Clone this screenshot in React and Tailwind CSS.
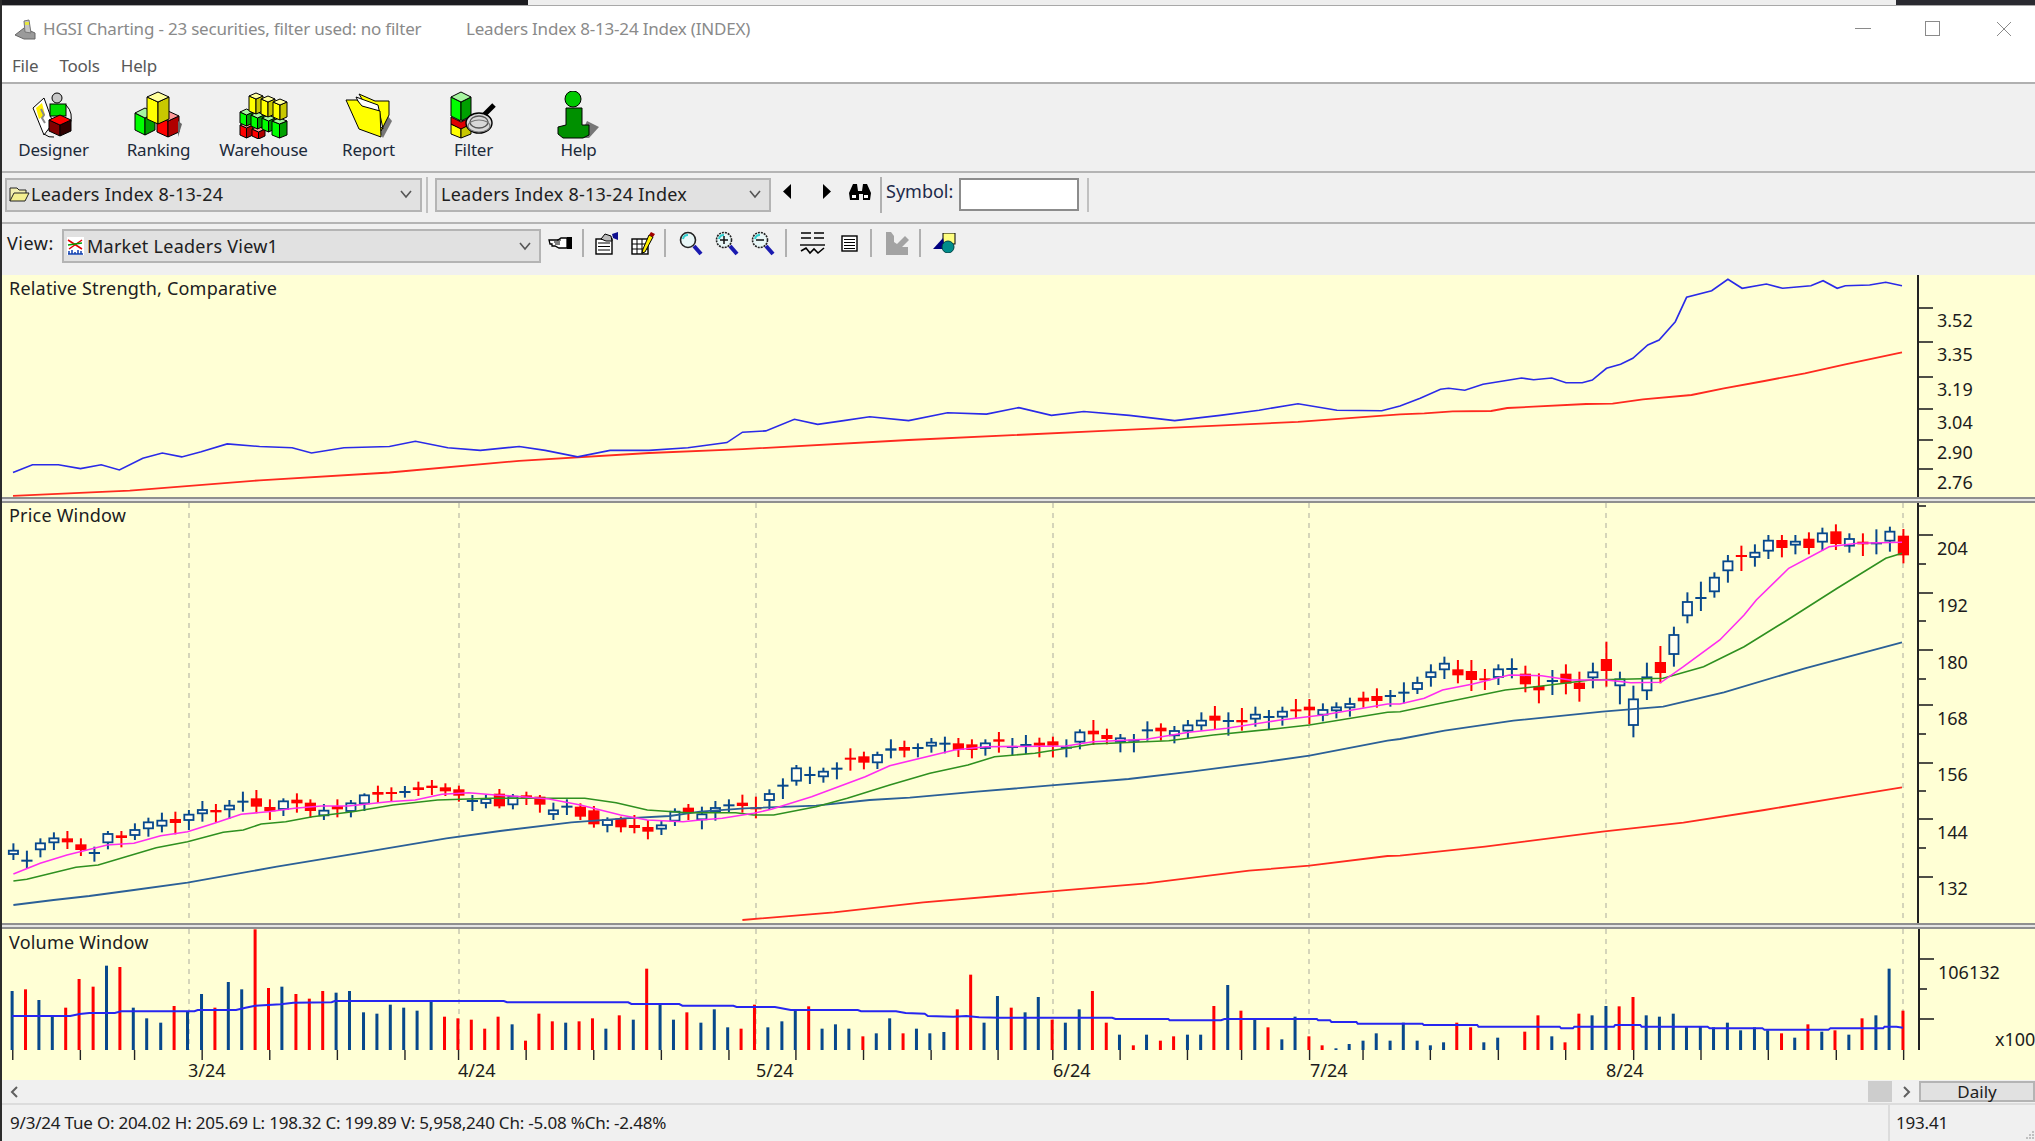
import React from "react";

const RED = "#ff0000";
const BLUE = "#07488c";

const z4 = (p) => [p[0] / 2.24, 500 + p[1] / 3];
const z5 = (p) => [700 + p[0] / 2.24, 500 + p[1] / 3];
const z6 = (p) => [1400 + p[0] / 2.47, 500 + p[1] / 3];
const z3 = (p) => [1400 + p[0] / 2.47, p[1] / 3];
const dsp = (p) => [p[0] * 1.298, p[1] * 1.298];
const z7 = (p) => [p[0] / 1.568, 920 + p[1] / 3];
const z8 = (p) => [1000 + p[0] / 1.515, 920 + p[1] / 3];
const pts = (a) => a.map((p) => p[0].toFixed(1) + "," + p[1].toFixed(1)).join(" ");

const rsBlue = [
  ...[[10,364],[25,358],[45,358],[62,361],[78,358],[92,362],[110,353],[125,349],[140,352],[155,348],[175,342],[200,344],[225,345],[240,349],[265,345],[300,344],[320,340],[345,345],[370,347],[400,344],[420,347],[445,352],[470,347],[500,347],[530,345],[560,341],[572,333],[590,332],[612,323],[630,327],[650,324],[670,321],[700,324],[730,318],[760,319],[785,314],[810,320],[835,317],[870,320],[905,324],[940,320],[970,316],[1000,311],[1030,316]].map(dsp),
  ...[[-45,1232],[0,1218],[50,1195],[100,1168],[120,1165],[160,1171],[205,1153],[270,1140],[300,1134],[330,1139],[375,1134],[410,1148],[450,1148],[475,1140],[510,1105],[545,1093],[575,1075],[612,1035],[640,1020],[680,965],[708,892],[770,872],[810,838],[845,865],[905,852],[945,865],[1015,857],[1045,842],[1080,865],[1100,857],[1160,855],[1200,847],[1240,857]].map(z3),
];
const rsRed = [
  ...[[10,382],[100,378],[200,370],[300,364],[400,355],[500,349],[572,346],[700,339],[850,332],[1000,325]].map(dsp),
  ...[[0,1243],[60,1240],[130,1234],[225,1233],[265,1224],[330,1220],[460,1212],[525,1211],[600,1198],[720,1185],[800,1165],[900,1143],[1000,1120],[1100,1093],[1240,1057]].map(z3),
];

const magenta = [
  ...[[30,1122],[90,1090],[150,1065],[240,1035],[300,1030],[360,1007],[420,995],[480,970],[540,943],[600,935],[660,925],[720,918],[780,918],[870,905],[930,900],[990,883],[1050,878],[1110,885],[1170,890],[1230,897],[1300,915],[1390,945],[1450,960],[1530,965]].map(z4),
  ...[[0,960],[50,955],[120,940],[160,928],[250,890],[370,830],[425,797],[570,750],[640,740],[820,738],[880,725],[1000,718],[1095,697],[1180,685],[1300,660],[1395,645],[1540,612]].map(z5),
  ...[[0,612],[60,595],[105,570],[180,552],[270,525],[350,527],[420,540],[510,540],[570,548],[645,547],[700,500],[790,420],[850,345],[880,300],[960,205],[1060,140],[1130,130],[1240,127]].map(z6),
];
const green = [
  ...[[30,1143],[60,1138],[170,1102],[220,1095],[350,1043],[420,1025],[500,997],[545,990],[585,972],[640,965],[700,950],[790,935],[880,915],[980,900],[1100,895],[1310,895],[1380,908],[1450,930],[1540,938]].map(z4),
  ...[[0,938],[80,938],[120,945],[165,945],[260,920],[330,895],[425,855],[515,820],[600,795],[660,770],[750,760],[880,732],[1050,722],[1150,705],[1300,685],[1365,675],[1540,637]].map(z5),
  ...[[0,635],[100,610],[260,570],[350,558],[470,540],[650,535],[750,500],[850,440],[950,365],[1080,265],[1200,175],[1240,160]].map(z6),
];
const maBlue = [
  ...[[30,1215],[120,1200],[200,1188],[300,1170],[420,1148],[620,1100],[800,1060],[1000,1015],[1120,993],[1280,967],[1400,955],[1500,948]].map(z4),
  ...[[0,935],[100,925],[260,917],[380,900],[470,893],[620,875],[780,857],[960,837],[1100,815],[1260,787],[1365,767],[1540,722]].map(z5),
  ...[[0,717],[110,692],[280,662],[500,635],[650,620],[800,577],[1000,505],[1240,427]].map(z6),
];
const maRed = [
  ...[[95,1260],[300,1237],[500,1207],[780,1175],[1000,1150],[1230,1112],[1365,1097],[1540,1068]].map(z5),
  ...[[0,1067],[210,1040],[500,995],[700,968],[900,930],[1100,890],[1240,862]].map(z6),
];

const candles = [
[1030,1080,1052,1062,"h"],[1052,1105,1079,1085,"b"],[1015,1072,1030,1048,"h"],[997,1050,1015,1027,"h"],[993,1047,1015,1027,"r"],[1015,1068,1033,1050,"r"],[1040,1085,1056,1062,"b"],[993,1048,1002,1027,"h"],[993,1042,1006,1014,"r"],[970,1020,990,1005,"h"],
[953,1010,967,985,"h"],[938,997,962,977,"h"],[935,1003,957,969,"r"],[930,990,944,960,"h"],[903,965,930,940,"h"],[912,967,930,937,"r"],[900,957,917,928,"h"],[875,935,902,905,"b"],[870,940,895,920,"r"],[898,960,921,934,"r"],
[895,948,904,927,"h"],[880,938,899,910,"r"],[898,953,908,933,"r"],[912,960,932,946,"h"],[898,952,918,928,"r"],[900,952,910,933,"h"],[880,933,886,910,"h"],[857,908,876,884,"r"],[862,905,876,878,"r"],[858,893,873,878,"b"],
[845,888,862,870,"r"],[840,885,857,864,"r"],[850,888,862,874,"r"],[857,905,868,887,"r"],[885,933,900,902,"b"],[885,925,897,909,"h"],[867,925,881,919,"r"],[882,928,890,913,"h"],[875,915,886,894,"r"],[885,938,890,914,"r"],
[908,960,931,942,"h"],[898,945,917,922,"b"],[910,960,920,950,"r"],[918,983,931,973,"r"],[952,997,960,975,"h"],[950,997,955,982,"r"],[945,1000,975,984,"r"],[960,1018,981,995,"r"],[960,1005,976,986,"h"],[925,978,935,962,"h"],[912,960,923,937,"r"],
[920,988,943,958,"h"],[903,962,924,935,"h"],[898,938,913,917,"b"],[884,938,908,918,"r"],[890,955,922,926,"r"],[868,930,882,900,"h"],[835,897,854,860,"b"],[795,857,805,842,"h"],[800,852,822,824,"b"],[803,848,815,829,"h"],
[787,838,803,805,"b"],[745,812,773,775,"r"],[755,808,769,788,"r"],[755,807,765,787,"h"],[718,775,745,752,"b"],[722,772,741,752,"r"],[730,772,741,743,"b"],[714,758,728,737,"h"],[710,760,728,733,"b"],[714,771,730,750,"r"],
[718,775,733,750,"r"],[718,767,730,744,"h"],[696,758,718,725,"r"],[714,767,738,741,"b"],[705,762,732,736,"b"],[713,772,728,737,"r"],[710,772,724,737,"r"],[718,772,740,745,"b"],[688,748,697,725,"h"],[660,735,692,703,"r"],
[686,733,705,717,"r"],[702,757,715,725,"h"],[702,757,719,721,"b"],[664,722,688,693,"b"],[670,722,683,694,"r"],[678,730,693,706,"h"],[660,715,676,692,"h"],[637,692,662,676,"h"],[618,690,647,662,"r"],[637,707,660,666,"b"],
[624,692,660,667,"r"],[620,680,644,656,"h"],[630,688,648,654,"b"],[620,677,635,650,"h"],[597,657,628,630,"r"],[597,672,620,631,"r"],[610,664,630,644,"h"],[607,655,622,631,"h"],[593,650,612,622,"h"],[575,623,593,604,"r"],
[565,623,588,603,"r"],[570,620,585,587,"b"],[547,610,575,578,"b"],[530,582,549,567,"h"],[493,560,517,531,"h"],[470,537,491,508,"h"],[480,550,508,526,"r"],[480,573,513,540,"r"],[507,570,535,541,"r"],[493,555,508,531,"h"],
[475,535,504,509,"b"],[497,577,521,553,"r"],[520,610,558,571,"r"],[510,585,540,546,"b"],[493,583,521,551,"r"],[515,605,548,567,"r"],[488,565,517,532,"h"],[425,560,477,513,"r"],[515,613,538,556,"h"],[557,712,598,675,"h"],
[488,600,532,571,"h"],[438,550,486,519,"r"],[380,500,405,462,"h"],[277,370,306,346,"h"],[245,333,291,297,"b"],[217,293,233,274,"h"],[165,248,184,211,"h"],[137,213,165,167,"r"],[133,200,158,171,"h"],[105,177,122,152,"h"],
[105,172,120,144,"r"],[105,163,125,134,"h"],[97,163,116,144,"r"],[83,152,100,125,"h"],[73,150,94,132,"r"],[100,158,117,137,"h"],[100,168,125,133,"r"],[88,163,127,129,"b"],[80,155,95,122,"h"],[87,190,107,166,"r"],
];

const vol7 = [[19,"b",213],[40,"r",208],[61,"b",240],[82,"b",288],[103,"r",263],[124,"r",177],[146,"r",200],[167,"b",137],[188,"r",141],[209,"b",263],[230,"b",295],[252,"b",308],[273,"r",258],[294,"b",275],[316,"b",222],[337,"r",263],[358,"b",186],[379,"b",208],[400,"r",28],[421,"r",204],[442,"b",200],[464,"r",222],[485,"r",236],[506,"r",213],[527,"b",218],[548,"b",213],[570,"b",277],[591,"b",281],[612,"b",254],[633,"b",263],[654,"b",272],[676,"b",243],[697,"r",290],[718,"r",295],[739,"r",299],[760,"r",326],[781,"r",290],[803,"b",313],[824,"r",362],[845,"r",281],[866,"r",304],[887,"b",308],[908,"r",304],[929,"r",295],[950,"b",326],[971,"r",286],[993,"b",299],[1014,"r",146],[1035,"b",254],[1056,"b",299],[1077,"r",277],[1099,"b",308],[1120,"b",268],[1141,"b",322],[1162,"r",326],[1183,"r",254],[1204,"b",322],[1226,"b",304],[1247,"b",272],[1268,"r",259],[1289,"b",326],[1310,"b",313],[1331,"b",326],[1353,"r",349],[1374,"b",340],[1395,"b",295],[1416,"r",340],[1437,"b",326],[1458,"b",340],[1480,"b",336],[1501,"r",268],[1522,"r",164],[1543,"b",308],[1564,"b",228]];
const vol8 = [[17,"r",263],[38,"b",277],[58,"b",231],[79,"r",299],[99,"b",308],[120,"b",268],[140,"r",213],[161,"r",308],[181,"b",344],[202,"r",376],[222,"b",344],[243,"r",362],[263,"r",349],[284,"b",344],[304,"b",344],[324,"r",258],[345,"b",195],[365,"r",272],[386,"b",299],[406,"r",322],[427,"b",358],[447,"b",290],[468,"r",349],[488,"r",376],[509,"b",385],[529,"b",372],[550,"b",362],[570,"b",340],[591,"b",362],[611,"b",308],[632,"b",362],[652,"b",376],[672,"b",367],[692,"r",308],[713,"r",322],[733,"b",367],[754,"b",353],[795,"r",335],[815,"r",286],[836,"b",349],[856,"r",367],[877,"r",281],[897,"b",286],[918,"b",258],[938,"r",259],[959,"r",231],[979,"b",286],[999,"b",290],[1020,"b",281],[1040,"b",318],[1061,"b",318],[1081,"b",322],[1102,"b",308],[1122,"b",331],[1143,"b",322],[1163,"b",331],[1184,"r",340],[1204,"b",353],[1224,"r",313],[1245,"b",335],[1265,"r",331],[1286,"b",344],[1306,"r",295],[1327,"b",286],[1347,"b",146],[1368,"r",272]];
const volMA = [
  ...[[19,288],[110,288],[125,282],[140,279],[180,279],[190,274],[305,274],[310,270],[370,270],[385,263],[400,257],[440,253],[460,248],[520,247],[525,243],[790,243],[795,247],[985,247],[990,252],[1065,252],[1070,257],[1150,257],[1155,261],[1215,261],[1240,270],[1345,270],[1350,274],[1405,274],[1420,279],[1450,281],[1455,288],[1495,290],[1515,288],[1535,292]].map(z7),
  ...[[0,293],[170,293],[175,297],[255,297],[257,301],[335,301],[340,297],[480,297],[482,301],[500,301],[502,306],[540,306],[542,311],[640,311],[642,315],[723,315],[725,320],[848,320],[850,325],[868,325],[870,320],[930,320],[932,315],[970,315],[972,320],[1072,320],[1075,325],[1155,325],[1158,329],[1255,329],[1258,325],[1338,325],[1340,320],[1358,320],[1368,323]].map(z8),
];
const volTicks = [...[20,126,211,317,423,529,635,719,825,931,1037,1143,1248,1354,1460,1565].map((x) => x / 1.568), ...[80,182,284,366,469,550,652,755,857,960,1062,1164,1267,1369].map((x) => 1000 + x / 1.515)];
const grid = [189, 459, 756, 1053, 1309, 1606, 1903];

const AxisText = ({ x, y, children }) => (
  <text x={x} y={y} fontSize="18" fill="#1c1c1c" dominantBaseline="central" fontFamily="'Noto Sans', sans-serif">{children}</text>
);
const Tick = ({ y, w = 15 }) => <line x1="1918" x2={1918 + w} y1={y} y2={y} stroke="#222" strokeWidth="1.6" />;

function RsChart() {
  return (
    <svg className="absolute inset-0 w-full h-full overflow-visible" viewBox="0 275 2035 222">
      <polyline points={pts(rsRed)} fill="none" stroke="#ff2a1f" strokeWidth="1.8" />
      <polyline points={pts(rsBlue)} fill="none" stroke="#2a2ae8" strokeWidth="1.6" />
      <line x1="1918" x2="1918" y1="275" y2="497" stroke="#222" strokeWidth="2" />
      {[308, 342, 377, 409, 440, 469].map((y) => <Tick key={y} y={y} />)}
      {[[320, "3.52"], [354, "3.35"], [389, "3.19"], [422, "3.04"], [452, "2.90"], [482, "2.76"]].map(([y, t]) => <AxisText key={t} x={1937} y={y}>{t}</AxisText>)}
    </svg>
  );
}

function PriceChart() {
  return (
    <svg className="absolute inset-0 w-full h-full overflow-visible" viewBox="0 503 2035 420">
      {grid.map((x) => <line key={x} x1={x} x2={x} y1="503" y2="923" stroke="#b9b9a8" strokeWidth="1.2" strokeDasharray="5 5" />)}
      {candles.map(([hi, lo, top, bot, t], i) => {
        const x = 13.4 + i * 13.5;
        const c = t === "r" ? RED : BLUE;
        const yh = 500 + hi / 3, yl = 500 + lo / 3, yt = 500 + top / 3, yb = 500 + bot / 3;
        return (
          <g key={i}>
            <line x1={x} x2={x} y1={yh} y2={yl} stroke={c} strokeWidth="2" />
            {t === "h" ? (
              <rect x={x - 4.6} y={yt} width="9.2" height={Math.max(yb - yt, 2)} fill="#fffff0" stroke={c} strokeWidth="1.8" />
            ) : (
              <rect x={x - 5.6} y={yt} width="11.2" height={Math.max(yb - yt, 2)} fill={c} />
            )}
          </g>
        );
      })}
      <polyline points={pts(maRed)} fill="none" stroke="#ff2a1f" strokeWidth="1.8" />
      <polyline points={pts(maBlue)} fill="none" stroke="#2b6097" strokeWidth="1.8" />
      <polyline points={pts(green)} fill="none" stroke="#2f9020" strokeWidth="1.6" />
      <polyline points={pts(magenta)} fill="none" stroke="#ff2cf0" strokeWidth="1.6" />
      <line x1="1918" x2="1918" y1="503" y2="923" stroke="#222" strokeWidth="2" />
      {[[506, 8], [535], [564, 8], [593], [621, 8], [650], [679, 8], [705], [734, 8], [763], [791, 8], [819], [848, 8], [877]].map(([y, w]) => <Tick key={y} y={y} w={w || 15} />)}
      {[[548, "204"], [605, "192"], [662, "180"], [718, "168"], [774, "156"], [832, "144"], [888, "132"]].map(([y, t]) => <AxisText key={t} x={1937} y={y}>{t}</AxisText>)}
    </svg>
  );
}

function VolumeChart() {
  const bars = [...vol7.map((b) => [b[0] / 1.568, b[1], b[2]]), ...vol8.map((b) => [1000 + b[0] / 1.515, b[1], b[2]])];
  return (
    <svg className="absolute inset-0 w-full h-full overflow-visible" viewBox="0 929 2035 151">
      {grid.map((x) => <line key={x} x1={x} x2={x} y1="929" y2="1050" stroke="#b9b9a8" strokeWidth="1.2" strokeDasharray="5 5" />)}
      {bars.map(([x, t, top], i) => <rect key={i} x={x - 1.5} y={920 + top / 3} width="3" height={(390 - top) / 3} fill={t === "r" ? RED : BLUE} />)}
      {volTicks.map((x) => <line key={x} x1={x} x2={x} y1="1050" y2="1060" stroke="#222" strokeWidth="1.4" />)}
      <polyline points={pts(volMA)} fill="none" stroke="#2626f0" strokeWidth="2" />
      <line x1="1919" x2="1919" y1="929" y2="1050" stroke="#222" strokeWidth="2" />
      {[[959], [989, 8], [1019]].map(([y, w]) => <line key={y} x1="1919" x2={1919 + (w || 15)} y1={y} y2={y} stroke="#222" strokeWidth="1.6" />)}
      <AxisText x={1938} y={972}>106132</AxisText>
      <AxisText x={1995} y={1039}>x100</AxisText>
      {[[188, "3/24"], [458, "4/24"], [756, "5/24"], [1053, "6/24"], [1310, "7/24"], [1606, "8/24"]].map(([x, t]) => <AxisText key={t} x={x} y={1070}>{t}</AxisText>)}
    </svg>
  );
}

/* ---------- icons ---------- */
const Box = ({ x, y, w, h, d = 6, top, left, right }) => (
  <g stroke="#000" strokeWidth="1" strokeLinejoin="round">
    <polygon points={`${x},${y + d} ${x + w / 2},${y + d * 2} ${x + w / 2},${y + d * 2 + h} ${x},${y + d + h}`} fill={left} />
    <polygon points={`${x + w / 2},${y + d * 2} ${x + w},${y + d} ${x + w},${y + d + h} ${x + w / 2},${y + d * 2 + h}`} fill={right} />
    <polygon points={`${x},${y + d} ${x + w / 2},${y} ${x + w},${y + d} ${x + w / 2},${y + d * 2}`} fill={top} />
  </g>
);
const G = { top: "#a6f5a0", left: "#00ff00", right: "#00a000" };
const Rd = { top: "#ff9a9a", left: "#ff0000", right: "#b00000" };
const Y = { top: "#ffff9c", left: "#ffff00", right: "#c8c800" };

const DesignerIcon = () => (
  <svg width="46" height="48" viewBox="0 0 46 48">
    <polygon points="2,17 13,7 22,32 13,44" fill="#fff" stroke="#000" />
    <polygon points="5,17 11,12 14,24 8,28" fill="#ffee00" />
    <path d="M10 18 l3 6 -2 3 3 5" fill="none" stroke="#888" strokeWidth="2" />
    <circle cx="26" cy="7" r="5" fill="#c8c8c8" stroke="#000" />
    <rect x="19" y="13" width="16" height="12" fill="#00dd00" stroke="#000" />
    <path d="M35 14 q8 8 4 20" fill="none" stroke="#000" />
    <path d="M13 43 q5 4 10 3" fill="none" stroke="#000" />
    <Box x={18} y={24} w={22} h={11} d={5} top="#ff0000" left="#800000" right="#300000" />
  </svg>
);
const RankingIcon = () => (
  <svg width="50" height="48" viewBox="0 0 50 48">
    <Box x={1} y={17} w={20} h={17} d={5} {...G} />
    <Box x={23} y={20} w={22} h={16} d={5} {...Rd} />
    <polygon points="44,30 48,33 44,46" fill="#666" />
    <Box x={13} y={1} w={22} h={22} d={5} {...Y} />
  </svg>
);
const WarehouseIcon = () => (
  <svg width="50" height="48" viewBox="0 0 50 48">
    <Box x={1} y={31} w={13} h={10} d={3} {...Rd} />
    <Box x={13} y={35} w={13} h={7} d={3} {...Rd} />
    <Box x={1} y={18} w={13} h={11} d={3} {...G} />
    <Box x={12} y={21} w={13} h={11} d={3} {...G} />
    <Box x={23} y={24} w={13} h={11} d={3} {...G} />
    <Box x={33} y={27} w={15} h={14} d={3} {...G} />
    <Box x={10} y={2} w={14} h={15} d={3} {...Y} />
    <Box x={22} y={5} w={14} h={15} d={3} {...Y} />
    <Box x={34} y={8} w={14} h={15} d={3} {...Y} />
  </svg>
);
const ReportIcon = () => (
  <svg width="48" height="48" viewBox="0 0 48 48">
    <polygon points="42,24 47,30 38,47 35,42" fill="#777" />
    <polygon points="14,3 30,10 44,10 44,24 36,40" fill="#ffff00" stroke="#000" />
    <polygon points="11,6 33,14 38,38 18,20" fill="#fff" stroke="#000" />
    <polygon points="1,9 12,9 17,15 35,20 36,46 14,38" fill="#ffff00" stroke="#000" />
  </svg>
);
const FilterIcon = () => (
  <svg width="48" height="48" viewBox="0 0 48 48">
    <Box x={1} y={1} w={20} h={19} d={5} {...G} />
    <Box x={1} y={29} w={20} h={10} d={4} {...Y} />
    <polygon points="1,26 11,31 21,26 21,33 11,38 1,33" fill="#e00000" stroke="#000" />
    <line x1="33" y1="25" x2="44" y2="14" stroke="#000" strokeWidth="5" />
    <ellipse cx="29" cy="32" rx="13" ry="10" fill="#d8d8d8" stroke="#000" strokeWidth="1.4" />
    <ellipse cx="29" cy="31" rx="9" ry="6" fill="none" stroke="#555" strokeWidth="1.4" />
    <ellipse cx="29" cy="35" rx="11" ry="6" fill="none" stroke="#777" strokeWidth="1.2" />
  </svg>
);
const HelpIcon = () => (
  <svg width="44" height="48" viewBox="0 0 44 48">
    <polygon points="30,30 42,36 32,47 22,47" fill="#777" />
    <circle cx="16" cy="8" r="8" fill="#00c800" stroke="#000" />
    <path d="M9 17 h16 v17 h7 v10 l-6 3 H6 l-5 -4 v-7 l8 -2 z" fill="#009000" stroke="#000" />
  </svg>
);
const TitleIcon = () => (
  <svg width="23" height="22" viewBox="0 0 23 22">
    <polygon points="1,16 10,9 21,14 21,20 10,20" fill="#9a9a9a" stroke="#666" />
    <polygon points="10,2 15,1 17,14 11,13" fill="#c4c4c4" stroke="#777" />
    <rect x="11" y="3" width="4" height="3" fill="#e6e640" />
  </svg>
);
const FolderSmall = () => (
  <svg width="21" height="17" viewBox="0 0 21 17">
    <path d="M1 15 V2 h7 l2 2 h7 v3" fill="#f4f0b0" stroke="#222" />
    <polygon points="1,15 5,7 20,7 16,15" fill="#f4ef90" stroke="#222" />
  </svg>
);
const ChartSmall = () => (
  <svg width="17" height="18" viewBox="0 0 17 18">
    <rect width="17" height="18" fill="#fff" />
    <path d="M1 3 L15 12 M15 3 L2 12" stroke="#e00000" strokeWidth="1.5" />
    <path d="M1 8 L15 6" stroke="#00a000" strokeWidth="1.5" />
    <path d="M1 17 h15 M2 17 v-3 M5 17 v-4 M8 17 v-2 M11 17 v-4 M14 17 v-3" stroke="#1040b0" strokeWidth="1.5" />
  </svg>
);
const Chevron = () => (
  <svg width="14" height="9" viewBox="0 0 14 9"><polyline points="2,1 7,7 12,1" fill="none" stroke="#555" strokeWidth="1.6" /></svg>
);
const Combo = ({ w, children }) => (
  <div className={`${w} h-[34px] shrink-0 flex items-center border-2 border-[#b4b4b4] bg-[#e1e1e1] pr-[7px] tracking-[0.25px]`}>
    <div className="flex-1 flex items-center gap-[1px] min-w-0">{children}</div>
    <Chevron />
  </div>
);
const VSep = ({ h = "h-[36px]" }) => <div className={`w-[2px] ${h} bg-[#b0b0b0] shrink-0`} />;
const Mag = ({ sign }) => (
  <svg width="24" height="25" viewBox="0 0 24 25">
    <circle cx="9" cy="9" r="7.5" fill="#e8f6f6" stroke="#222" strokeWidth="1.6" strokeDasharray={sign ? "2 1" : "none"} />
    <path d="M4 8 a5 5 0 0 1 5 -4" fill="none" stroke="#30d0d0" strokeWidth="2" />
    {sign === "+" && <path d="M5 9 h8 M9 5 v8" stroke="#111" strokeWidth="1.5" />}
    {sign === "-" && <path d="M5 9 h8" stroke="#111" strokeWidth="1.5" />}
    <line x1="15" y1="15" x2="22" y2="23" stroke="#1a1ab0" strokeWidth="4" />
  </svg>
);
const HandIcon = () => (
  <svg width="25" height="14" viewBox="0 0 25 14">
    <path d="M1 4 h9 l3 -2 h6 v10 h-8 l-4 -2 h-3 v-2 h-2 z" fill="#fff" stroke="#000" strokeWidth="1.3" />
    <path d="M6 6 h6 M7 8 h5 M9 4 h4" stroke="#000" />
    <rect x="19" y="1" width="5" height="12" fill="#000" />
  </svg>
);
const ClipIcon = () => (
  <svg width="24" height="23" viewBox="0 0 24 23">
    <rect x="1" y="7" width="16" height="15" fill="#fff" stroke="#000" strokeWidth="1.4" />
    <path d="M3 11 h12 M3 14.5 h12 M3 18 h12" stroke="#000" />
    <polygon points="6,7 10,2 16,4 17,9 11,9" fill="#bbb" stroke="#000" />
    <polygon points="17,2 23,0 23,8 18,6" fill="#101090" />
  </svg>
);
const PencilIcon = () => (
  <svg width="24" height="23" viewBox="0 0 24 23">
    <rect x="1" y="7" width="16" height="15" fill="#fff" stroke="#000" strokeWidth="1.4" />
    <path d="M1 12 h16 M1 17 h16 M6 7 v15 M11 7 v15" stroke="#000" />
    <polygon points="18,3 22,5 14,20 11,21 12,17" fill="#ffee00" stroke="#000" />
    <polygon points="18,3 20,0 24,2 22,5" fill="#a00000" />
  </svg>
);
const LinesIcon = () => (
  <svg width="25" height="25" viewBox="0 0 25 25">
    <path d="M1 2 h10 M14 2 h10 M1 7 h10 M14 7 h10" stroke="#000" strokeWidth="1.4" />
    <path d="M0 14 h25" stroke="#000" strokeWidth="1.4" />
    <polyline points="1,20 6,17 10,22 14,18 18,22 24,17" fill="none" stroke="#000" strokeWidth="1.6" />
  </svg>
);
const TableIcon = () => (
  <svg width="17" height="17" viewBox="0 0 17 17">
    <rect x="1" y="1" width="15" height="15" fill="#fff" stroke="#000" strokeWidth="1.4" />
    <path d="M3 4.5 h11 M3 7.5 h11 M3 10.5 h11 M3 13.5 h11" stroke="#000" strokeWidth="1.2" />
  </svg>
);
const GrayIcon = () => (
  <svg width="24" height="23" viewBox="0 0 24 23">
    <polygon points="1,0 6,0 9,4 9,10 12,12 20,4 24,8 17,15 23,15 23,23 1,23" fill="#a3a3a3" />
  </svg>
);
const ShapesIcon = () => (
  <svg width="23" height="20" viewBox="0 0 23 20">
    <rect x="10" y="0" width="12" height="11" fill="#ffff80" stroke="#000" />
    <polygon points="0,16 10,5 12,16" fill="#000080" />
    <circle cx="15" cy="14" r="6" fill="#008c8c" stroke="#044" />
  </svg>
);
const Binoc = () => (
  <svg width="24" height="20" viewBox="0 0 24 20">
    <path d="M2 19 L1 12 L5 3 h4 l1 7 h4 l1 -7 h4 l4 9 -1 7 h-7 v-6 h-4 v6 z" fill="#000" />
    <rect x="4" y="14" width="4" height="3" fill="#fff" />
    <rect x="16" y="14" width="4" height="3" fill="#fff" />
  </svg>
);

const tools = [
  ["Designer", DesignerIcon],
  ["Ranking", RankingIcon],
  ["Warehouse", WarehouseIcon],
  ["Report", ReportIcon],
  ["Filter", FilterIcon],
  ["Help", HelpIcon],
];

const Sep = () => <div className="h-[6px] shrink-0 border-y-2 border-[#8f8f8f] bg-[#e4e4e4]" />;

export default function App() {
  return (
    <div className="relative w-[2035px] h-[1141px] overflow-hidden flex flex-col bg-[#f0f0f0] font-['Noto_Sans',sans-serif] text-[#202020] text-[18px]">
      {/* desktop strip behind the window */}
      <div className="h-[6px] shrink-0 flex border-b border-[#a8a8a8]">
        <div className="w-[528px] bg-[#1c1c20]" />
        <div className="flex-1 bg-[#eeeeee]" />
        <div className="w-[139px] bg-[#2a2a30]" />
      </div>
      <div className="absolute left-0 top-0 bottom-0 w-[2px] bg-[#2c2c2c] z-10" />

      {/* title bar */}
      <div className="h-[48px] shrink-0 bg-white flex items-center pl-[14px] text-[#8a8a8a] text-[17px] tracking-[-0.2px]">
        <TitleIcon />
        <span className="ml-[6px] w-[423px] whitespace-nowrap -mt-[2px]">HGSI Charting - 23 securities, filter used: no filter</span>
        <span className="whitespace-nowrap -mt-[2px]">Leaders Index 8-13-24 Index (INDEX)</span>
        <div className="ml-auto flex items-center -mt-[3px]">
          <div className="w-[16px] h-[1px] bg-[#8a8a8a] mr-[54px]" />
          <div className="w-[15px] h-[15px] border border-[#8a8a8a] mr-[56px]" />
          <svg width="16" height="16" viewBox="0 0 16 16" className="mr-[23px]"><path d="M1 1 L15 15 M15 1 L1 15" stroke="#8a8a8a" strokeWidth="1" /></svg>
        </div>
      </div>
      {/* menu */}
      <div className="h-[30px] shrink-0 bg-white flex items-center pl-[12px] pb-[4px] gap-[21px] text-[#585858] text-[17px] tracking-[-0.2px] border-b-2 border-[#b0b0b0]">
        <span>File</span><span>Tools</span><span>Help</span>
      </div>

      {/* big toolbar */}
      <div className="h-[89px] shrink-0 flex items-start pt-[7px] border-b-2 border-[#b4b4b4]">
        {tools.map(([label, Icon]) => (
          <div key={label} className="w-[105px] flex flex-col items-center shrink-0 first:ml-[1px]">
            <div className="h-[48px] flex items-end"><Icon /></div>
            <span className="-mt-[1px] leading-[24px] text-[#1c2a3a] text-[17px] tracking-[-0.2px]">{label}</span>
          </div>
        ))}
      </div>

      {/* combo row */}
      <div className="h-[51px] shrink-0 flex items-center pl-[5px] pb-[6px] border-b-2 border-[#b4b4b4]">
        <Combo w="w-[417px]"><span className="ml-[2px]"><FolderSmall /></span><span>Leaders Index 8-13-24</span></Combo>
        <div className="w-[2px] h-[36px] bg-[#c0c0c0] ml-[4px] mr-[7px]" />
        <Combo w="w-[336px]"><span className="ml-[4px] whitespace-nowrap">Leaders Index 8-13-24 Index</span></Combo>
        <svg width="10" height="15" viewBox="0 0 10 15" className="ml-[11px] mr-[30px] -mt-[6px]"><polygon points="9,0 9,15 1,7.5" fill="#000" /></svg>
        <svg width="10" height="15" viewBox="0 0 10 15" className="mr-[16px] -mt-[6px]"><polygon points="1,0 1,15 9,7.5" fill="#000" /></svg>
        <span className="-mt-[8px] mr-[8px]"><Binoc /></span>
        <VSep />
        <span className="ml-[4px] -mt-[6px] w-[73px] text-[#1c2a4a]">Symbol:</span>
        <div className="w-[120px] h-[33px] bg-white border-2 border-[#8c8c8c]" />
        <div className="w-[2px] h-[34px] bg-[#c0c0c0] ml-[8px]" />
      </div>

      {/* view row */}
      <div className="h-[51px] shrink-0 flex items-center pl-[7px] pb-[7px]">
        <span className="w-[55px] -mt-[6px] tracking-[0.5px]">View:</span>
        <Combo w="w-[479px]"><span className="ml-[3px]"><ChartSmall /></span><span className="ml-[2px]">Market Leaders View1</span></Combo>
        <div className="flex items-center -mt-[6px]">
          <span className="ml-[7px]"><HandIcon /></span>
          <span className="ml-[9px]"><VSep h="h-[28px]" /></span>
          <span className="ml-[11px]"><ClipIcon /></span>
          <span className="ml-[12px]"><PencilIcon /></span>
          <span className="ml-[9px]"><VSep h="h-[28px]" /></span>
          <span className="ml-[13px]"><Mag /></span>
          <span className="ml-[12px]"><Mag sign="+" /></span>
          <span className="ml-[12px]"><Mag sign="-" /></span>
          <span className="ml-[10px]"><VSep h="h-[28px]" /></span>
          <span className="ml-[13px]"><LinesIcon /></span>
          <span className="ml-[16px]"><TableIcon /></span>
          <span className="ml-[12px]"><VSep h="h-[28px]" /></span>
          <span className="ml-[13px]"><GrayIcon /></span>
          <span className="ml-[10px]"><VSep h="h-[28px]" /></span>
          <span className="ml-[12px]"><ShapesIcon /></span>
        </div>
      </div>

      {/* panes */}
      <div className="relative h-[222px] shrink-0 bg-[#ffffd5]">
        <RsChart />
        <span className="absolute left-[9px] top-0 tracking-[0.2px]">Relative Strength, Comparative</span>
      </div>
      <Sep />
      <div className="relative h-[420px] shrink-0 bg-[#ffffd5]">
        <PriceChart />
        <span className="absolute left-[9px] top-[-1px] tracking-[0.2px]">Price Window</span>
      </div>
      <Sep />
      <div className="relative h-[151px] shrink-0 bg-[#ffffd5]">
        <VolumeChart />
        <span className="absolute left-[9px] top-0 tracking-[0.2px]">Volume Window</span>
      </div>

      {/* scroll row */}
      <div className="h-[25px] shrink-0 flex items-center pl-[10px] border-b-2 border-[#dcdcdc]">
        <svg width="8" height="12" viewBox="0 0 8 12"><polyline points="7,1 2,6 7,11" fill="none" stroke="#606060" strokeWidth="2" /></svg>
        <div className="ml-auto w-[24px] h-[21px] bg-[#cdcdcd]" />
        <svg width="8" height="12" viewBox="0 0 8 12" className="ml-[11px] mr-[8px]"><polyline points="1,1 6,6 1,11" fill="none" stroke="#606060" strokeWidth="2" /></svg>
        <div className="w-[116px] h-[21px] shrink-0 flex items-center justify-center bg-[#e1e1e1] border-2 border-[#b4b4b4] text-[17px]">Daily</div>
      </div>
      {/* status */}
      <div className="relative flex-1 flex items-center pl-[10px] text-[17px] tracking-[-0.2px]">
        <span className="whitespace-nowrap -mt-[1px]">9/3/24 Tue O: 204.02 H: 205.69 L: 198.32 C: 199.89 V: 5,958,240 Ch: -5.08 %Ch: -2.48%</span>
        <div className="ml-auto h-full flex items-center border-l-2 border-[#dcdcdc] w-[147px] pl-[6px]">193.41</div>
        <div className="absolute right-[1px] bottom-[2px] grid grid-cols-3 gap-[1px]">
          {[0, 0, 1, 0, 1, 1, 1, 1, 1].map((v, i) => <div key={i} className={v ? "w-[2px] h-[2px] bg-[#c0c0c0]" : "w-[2px] h-[2px]"} />)}
        </div>
      </div>
    </div>
  );
}
